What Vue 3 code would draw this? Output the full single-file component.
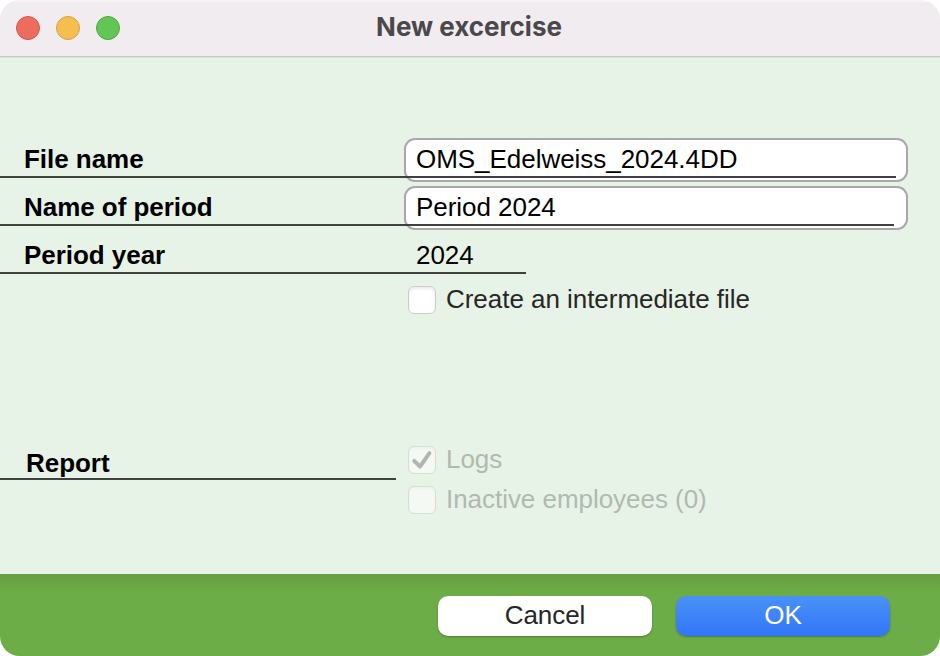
<template>
  <div class="window">
    <header class="titlebar">
      <div class="lights">
        <span class="light close"></span>
        <span class="light minimize"></span>
        <span class="light zoom"></span>
      </div>
      <h1 class="title">New excercise</h1>
    </header>

    <main class="content">
      <div class="row line-file">
        <label class="label" for="file-name">File name</label>
        <input id="file-name" v-model="fileName" class="field" type="text" spellcheck="false" />
      </div>
      <div class="row line-period">
        <label class="label" for="period-name">Name of period</label>
        <input id="period-name" v-model="periodName" class="field" type="text" spellcheck="false" />
      </div>
      <div class="row line-year">
        <span class="label">Period year</span>
        <span class="value">2024</span>
      </div>
      <button class="check intermediate" type="button" @click="intermediate = !intermediate">
        <span class="box">
          <svg v-if="intermediate" viewBox="0 0 28 28"><path d="M6.2 14.8 L12 20.6 L21.4 7.2" /></svg>
        </span>
        <span class="check-text">Create an intermediate file</span>
      </button>

      <div class="report">
        <div class="report-label">Report</div>
        <div class="report-options">
          <div v-for="option in reportOptions" :key="option.id" class="check disabled">
            <span class="box">
              <svg v-if="option.checked" viewBox="0 0 28 28"><path d="M6.2 14.8 L12 20.6 L21.4 7.2" /></svg>
            </span>
            <span class="check-text">{{ option.label }}</span>
          </div>
        </div>
      </div>
    </main>

    <footer class="footer">
      <button class="btn" type="button"><span>Cancel</span></button>
      <button class="btn primary" type="button"><span>OK</span></button>
    </footer>
  </div>
</template>

<script setup>
import { ref } from "vue";

const fileName = ref("OMS_Edelweiss_2024.4DD");
const periodName = ref("Period 2024");
const intermediate = ref(false);

const reportOptions = [
  { id: "logs", label: "Logs", checked: true },
  { id: "inactive", label: "Inactive employees (0)", checked: false }
];
</script>

<style>
body { margin: 0; background: #fff; }
</style>

<style scoped>
.window {
  display: flex;
  flex-direction: column;
  box-sizing: border-box;
  width: 940px;
  height: 656px;
  border-radius: 20px;
  overflow: hidden;
  background: #e8f3e7;
  font-family: "Liberation Sans", Arial, sans-serif;
  font-size: 26px;
  line-height: 30px;
  letter-spacing: -0.04px;
  color: #000;
}

.titlebar {
  display: grid;
  grid-template-columns: 1fr auto 1fr;
  align-items: center;
  box-sizing: border-box;
  height: 58px;
  flex: none;
  padding: 0 16px 2px;
  background: #f1ecef;
  border-bottom: 1px solid #d9e2d8;
  box-shadow: inset 0 2px 0 #f8f5f7, inset 0 -1px 0 #c5cac4;
}

.lights { display: flex; gap: 16px; }

.light {
  box-sizing: border-box;
  width: 24px;
  height: 24px;
  border-radius: 50%;
}

.light.close { background: #ed6b5f; border: 1px solid #d6574d; }
.light.minimize { background: #f5bf4f; border: 1px solid #d8a040; }
.light.zoom { background: #62c655; border: 1px solid #51a83e; }

.title {
  margin: 0;
  padding: 0 2px 2px 0;
  font-family: Inter, sans-serif;
  font-size: 26px;
  font-weight: 700;
  line-height: 30px;
  letter-spacing: 0;
  color: #4a484a;
}

.content {
  display: flex;
  flex-direction: column;
  gap: 4px;
  flex: 1;
  padding-top: 80px;
}

.row {
  position: relative;
  display: flex;
  align-items: center;
  height: 44px;
}

/* the rule runs across the lower edge of the field */
.row::after {
  content: "";
  position: absolute;
  left: 0;
  top: 38px;
  height: 2px;
  background: #3f413f;
  pointer-events: none;
}

.line-file::after { width: 896px; }
.line-period::after { width: 894px; }
.line-year::after { width: 526px; }

.label {
  box-sizing: border-box;
  width: 404px;
  padding: 0 0 2px 24px;
  font-weight: 700;
}

.field {
  box-sizing: border-box;
  width: 504px;
  height: 44px;
  margin: 0;
  padding: 0 10px 2px;
  border: 2px solid #a9a7a9;
  border-radius: 11px;
  outline: none;
  background: #fff;
  font: inherit;
  letter-spacing: inherit;
  color: #000;
}

.value { padding: 0 12px 2px; }

.check {
  display: flex;
  align-items: center;
  gap: 10px;
  height: 28px;
  padding: 0;
  border: 0;
  background: none;
  font: inherit;
  letter-spacing: inherit;
  color: #262726;
}

.intermediate { margin: 4px 0 0 408px; align-self: flex-start; }

.box {
  box-sizing: border-box;
  width: 28px;
  height: 28px;
  border: 1px solid #cbcfcb;
  border-radius: 6px;
  background: #fff;
  box-shadow: inset 0 2px 3px rgba(0, 0, 0, 0.08);
}

.box svg { display: block; width: 28px; height: 28px; margin: -1px; }

.box path {
  fill: none;
  stroke: #262726;
  stroke-width: 4;
  stroke-linecap: round;
  stroke-linejoin: round;
}

.check-text { padding-bottom: 2px; }

.check.disabled { color: #b1b9b0; }
.disabled .box {
  border-color: #d5ddd4;
  background: #f4f9f3;
  box-shadow: inset 0 2px 3px rgba(0, 0, 0, 0.03);
}
.disabled .box path { stroke: #b1b7b0; }

.report {
  display: flex;
  align-items: flex-start;
  gap: 12px;
  margin-top: 128px;
}

.report-label {
  box-sizing: border-box;
  width: 396px;
  height: 34px;
  padding-left: 26px;
  border-bottom: 2px solid #3f413f;
  font-weight: 700;
  line-height: 34px;
}

.report-options { display: flex; flex-direction: column; gap: 12px; }

.footer {
  display: flex;
  align-items: flex-start;
  justify-content: flex-end;
  gap: 24px;
  box-sizing: border-box;
  height: 82px;
  padding: 22px 50px 0 0;
  background: linear-gradient(#679e41, #6cad47 20px);
}

.btn {
  display: flex;
  align-items: center;
  justify-content: center;
  box-sizing: border-box;
  width: 214px;
  height: 40px;
  padding: 0 0 2px;
  border: 0;
  border-radius: 10px;
  background: #fff;
  box-shadow: 0 1px 2px rgba(0, 0, 0, 0.28);
  font: inherit;
  letter-spacing: inherit;
  color: #262626;
}

.btn.primary {
  background: linear-gradient(#4b91f8, #3176f7);
  color: #fff;
}
</style>
